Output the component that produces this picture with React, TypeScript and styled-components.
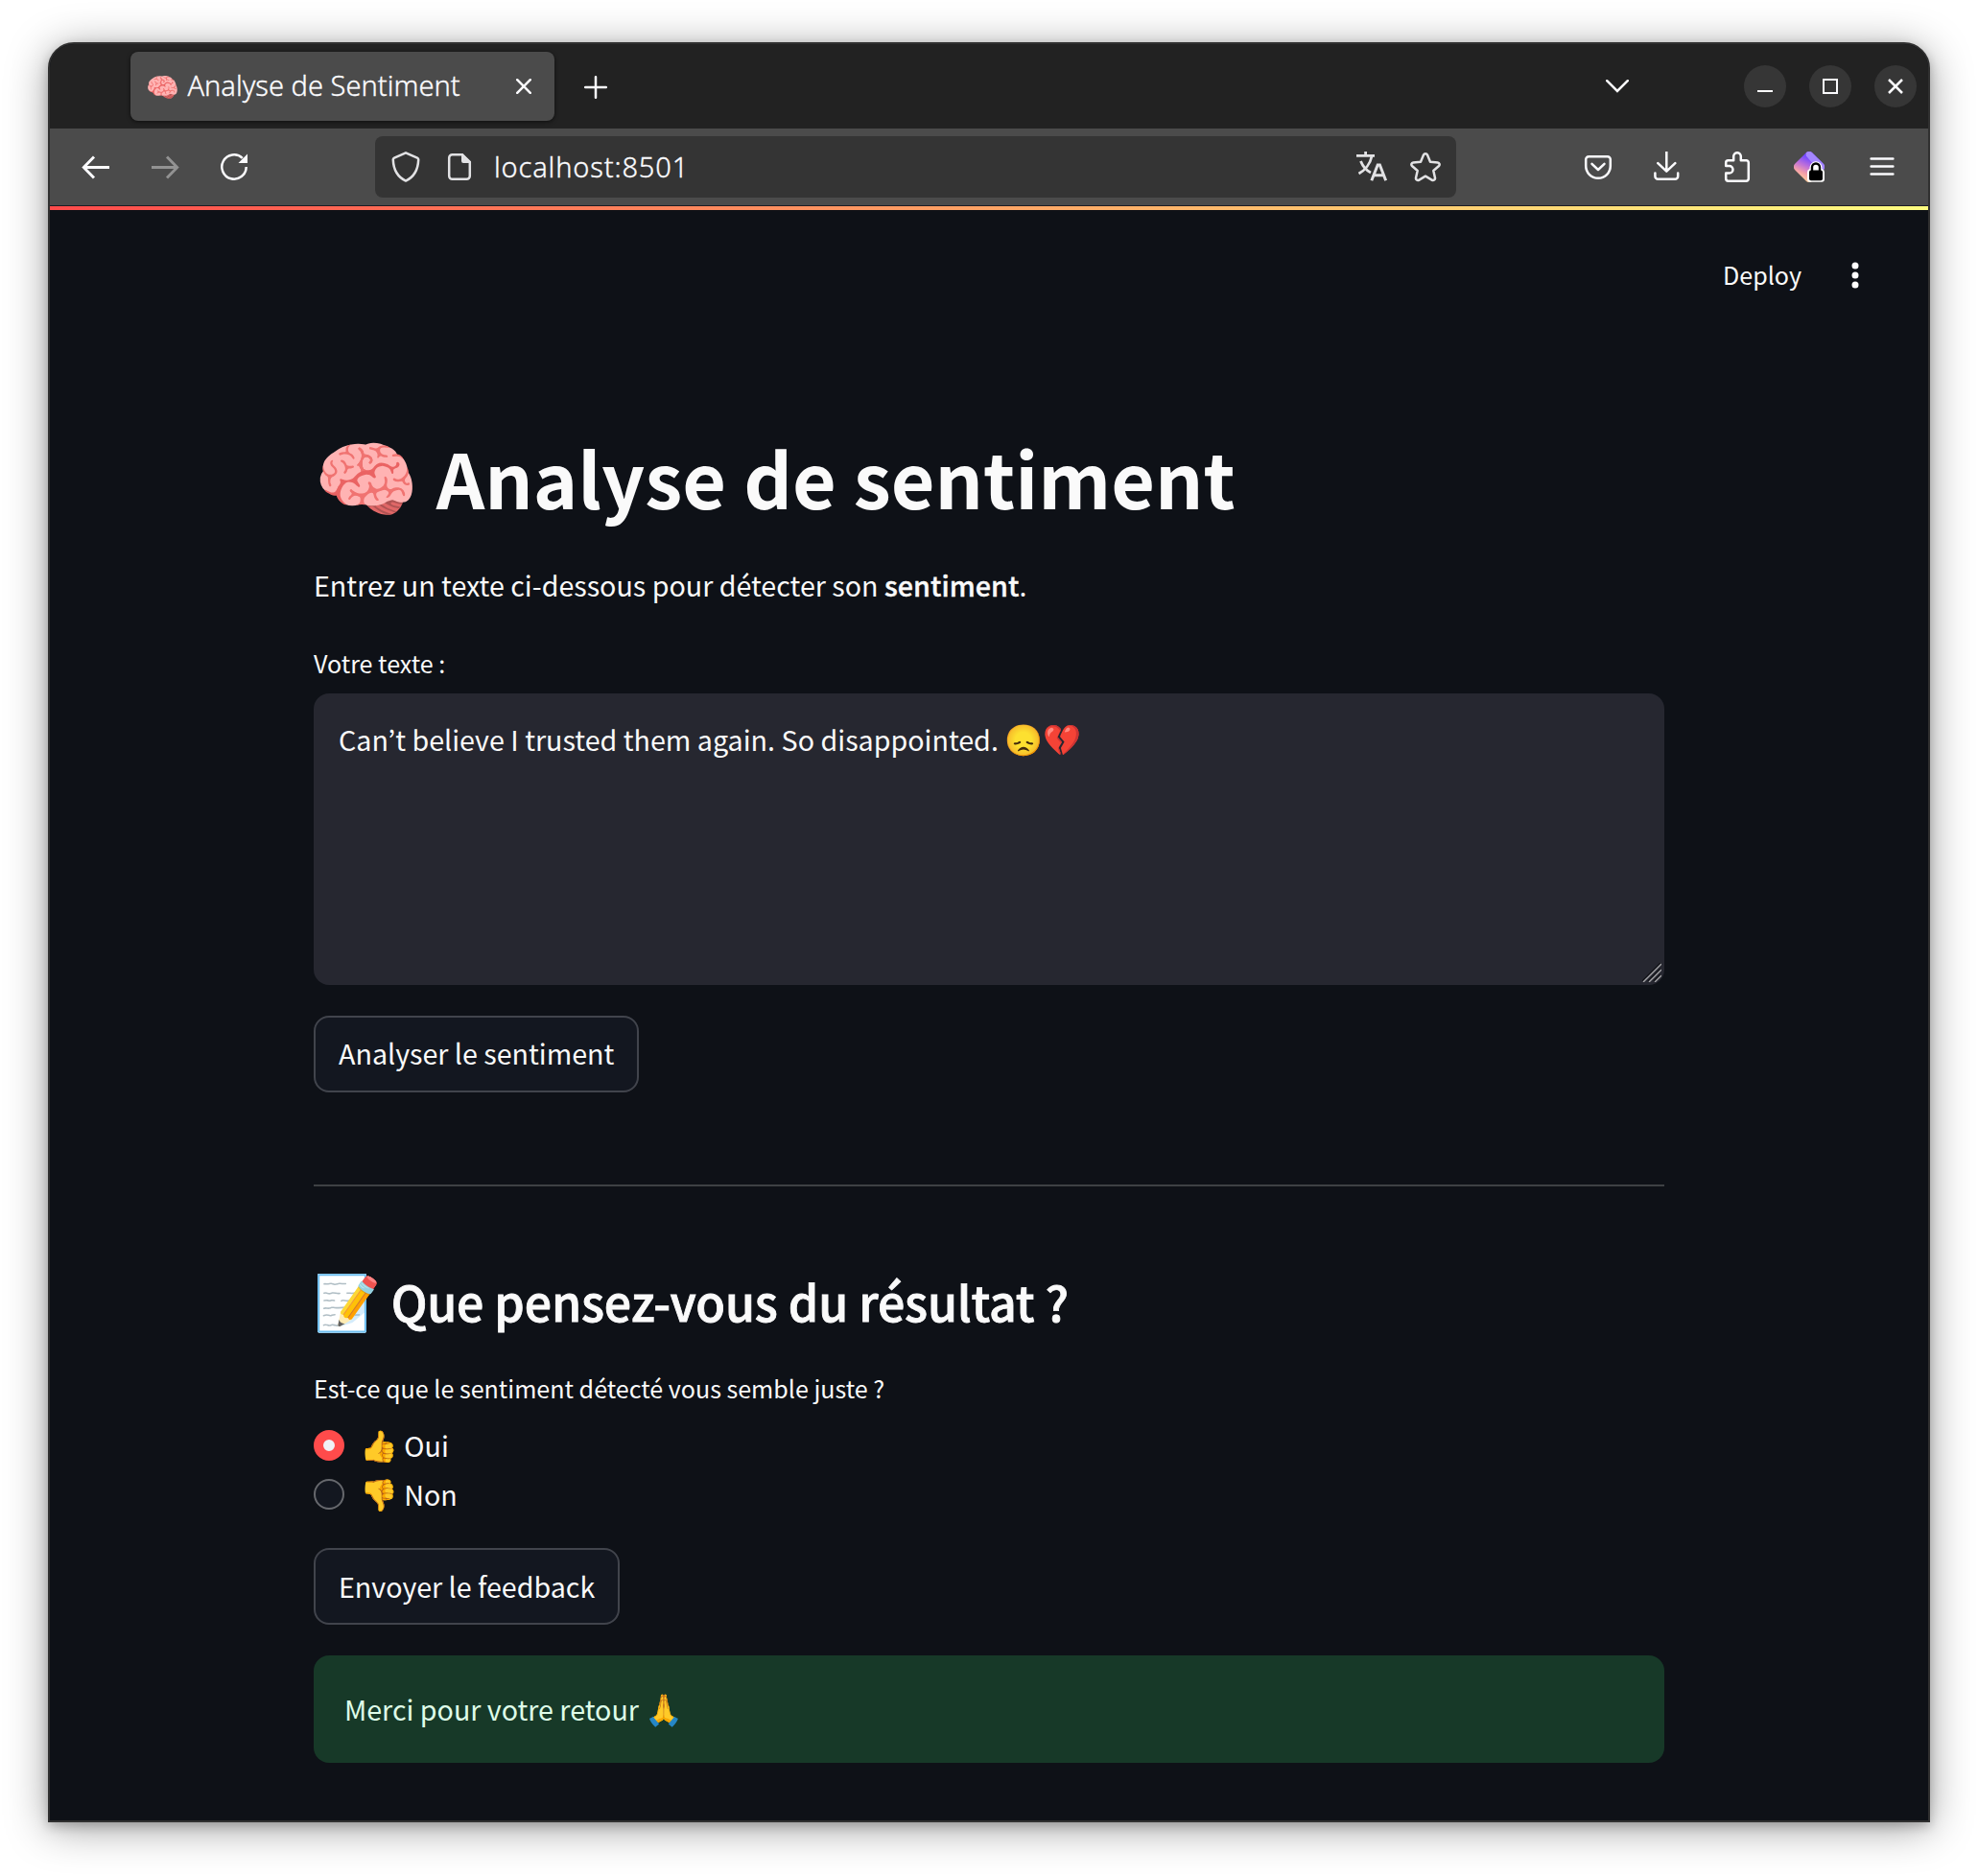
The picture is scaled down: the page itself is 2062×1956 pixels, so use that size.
import React from "react";
import styled, { createGlobalStyle } from "styled-components";

const contentFont = `"Noto Sans CJK KR", "Noto Sans", "Noto Color Emoji", sans-serif`;
const chromeFont = `"Noto Sans", "Noto Color Emoji", sans-serif`;

const GlobalStyle = createGlobalStyle`
  body { margin: 0; background: #fff; }
  *, *::before, *::after { box-sizing: border-box; }
`;

const Desktop = styled.div`
  width: 2062px;
  height: 1956px;
  padding: 44px 50px 56px;
  overflow: hidden;
  background: #fff;
`;

const Window = styled.div`
  display: flex;
  flex-direction: column;
  height: 1856px;
  border: 2px solid #303030;
  border-radius: 27px 27px 0 0;
  overflow: hidden;
  background: #0e1117;
  box-shadow: 0 4px 12px rgba(0, 0, 0, 0.22), 0 6px 44px rgba(0, 0, 0, 0.38);
`;

/* Browser chrome */

const TabBar = styled.div`
  display: flex;
  align-items: center;
  height: 88px;
  flex: none;
  padding: 0 12px 0 84px;
  background: #222;
`;

const Tab = styled.div`
  display: flex;
  align-items: center;
  width: 442px;
  height: 72px;
  padding: 0 24px 0 16px;
  border-radius: 8px;
  background: #4b4b4b;
  box-shadow: 0 1px 4px rgba(0, 0, 0, 0.6);
`;

const Favicon = styled.span`
  padding-bottom: 1px;
  font: 28px/40px ${chromeFont};
  white-space: nowrap;
`;

const TabTitle = styled.span`
  flex: 1;
  margin-left: 8.5px;
  padding-bottom: 3px;
  font: 300 29px/40px ${chromeFont};
  letter-spacing: 0.03px;
  -webkit-text-stroke: 0.35px currentColor;
  white-space: nowrap;
  color: #fbfbfe;
`;

const NewTab = styled.span`
  display: flex;
  margin: 2px auto 0 31px;
`;

const WindowButtons = styled.div`
  display: flex;
  gap: 24px;
  margin-left: 120px;
`;

const WindowButton = styled.span`
  display: grid;
  place-items: center;
  width: 44px;
  height: 44px;
  border-radius: 50%;
  background: #363636;
`;

const NavBar = styled.div`
  display: flex;
  align-items: center;
  height: 81px;
  flex: none;
  padding: 0 32px;
  background: #4b4b4b;
  border-bottom: 1px solid #1c1b22;
`;

const NavGroup = styled.div<{ $gap: number }>`
  display: flex;
  align-items: center;
  gap: ${(p) => p.$gap}px;
`;

const UrlBar = styled.div`
  display: flex;
  align-items: center;
  width: 1127px;
  height: 64px;
  margin: 0 132px 0 131px;
  padding: 0 16px;
  border-radius: 8px;
  background: #343434;
`;

const Url = styled.span`
  flex: 1;
  margin-left: 20px;
  padding-bottom: 1px;
  font: 300 29px/40px ${chromeFont};
  letter-spacing: 0.85px;
  -webkit-text-stroke: 0.35px currentColor;
  color: #fbfbfe;
`;

/* Page */

const Decoration = styled.div`
  height: 4px;
  flex: none;
  background: linear-gradient(90deg, #ff4b4b, #fffd80);
`;

const AppHeader = styled.header`
  display: flex;
  align-items: center;
  justify-content: flex-end;
  height: 136px;
  flex: none;
  padding-right: 60px;
`;

const Deploy = styled.span`
  margin: 0 40px 2px 0;
  font: 400 25.07px/40px ${contentFont};
  color: #fafafa;
`;

const Main = styled.main`
  display: flex;
  flex-direction: column;
  align-items: flex-start;
  width: 1408px;
  margin: 0 auto;
  font: 400 28.65px/52px ${contentFont};
  color: #fafafa;
  white-space: nowrap;
`;

const Title = styled.h1`
  margin: 89px 0 0;
  font-size: 78.8px;
  font-weight: 700;
  line-height: 106px;
  word-spacing: 0.2px;
`;

const Emoji = styled.span<{ $size: number }>`
  font-size: ${(p) => p.$size}px;
  line-height: 0;
`;

const Intro = styled.p`
  margin: 34px 0 0;
`;

const Strong = styled.strong`
  font-weight: 500;
  letter-spacing: 0.08px;
  -webkit-text-stroke: 0.4px currentColor;
`;

const Label = styled.label<{ $top: number }>`
  margin-top: ${(p) => p.$top}px;
  font-size: 25.07px;
  line-height: 42px;
`;

const TextBox = styled.div`
  display: flex;
  justify-content: space-between;
  align-items: flex-end;
  width: 100%;
  height: 304px;
  margin-top: 11px;
  padding: 0 3px 3px 26px;
  border-radius: 16px;
  background: #262730;
`;

const TextValue = styled.span`
  align-self: flex-start;
  margin-top: 24px;
  line-height: 48px;
  word-spacing: 0.1px;
`;

const Button = styled.button<{ $top: number; $bottom?: number }>`
  height: 80px;
  margin: ${(p) => p.$top}px 0 0;
  padding: 0 24px ${(p) => p.$bottom ?? 2}px;
  border: 2px solid #41444c;
  border-radius: 16px;
  background: #131720;
  font: inherit;
  color: inherit;
`;

const Divider = styled.hr`
  width: 100%;
  height: 2px;
  margin: 96px 0 0;
  border: 0;
  background: #3e4144;
`;

const Subtitle = styled.h3`
  margin: 85px 0 0;
  font-size: 50.1px;
  font-weight: 500;
  line-height: 68px;
  letter-spacing: -0.18px;
  -webkit-text-stroke: 0.8px currentColor;
`;

const RadioGroup = styled.div`
  display: flex;
  flex-direction: column;
  gap: 19px;
  margin-top: 23px;
`;

const RadioOption = styled.label`
  display: flex;
  align-items: center;
  gap: 16px;
  height: 32px;
`;

const RadioMark = styled.span<{ $checked?: boolean }>`
  width: 32px;
  height: 32px;
  border-radius: 50%;
  border: ${(p) => (p.$checked ? "10px solid #ff4b4b" : "2px solid #66686d")};
  background: ${(p) => (p.$checked ? "#f0f2f6" : "#131720")};
`;

const Alert = styled.div`
  display: flex;
  align-items: center;
  width: 100%;
  height: 112px;
  margin-top: 32px;
  padding: 0 32px 1px;
  border-radius: 16px;
  background: #173928;
  color: #dffde9;
`;

type IconProps = { size?: number; h?: number; color?: string; width?: number; children: React.ReactNode };

const Svg = styled.svg`
  display: block;
  flex: none;
`;

function Icon({ size = 32, h, color = "#fbfbfe", width = 2.5, children }: IconProps) {
  const height = h ?? size;
  return (
    <Svg width={size} height={height} viewBox={`0 0 ${size} ${height}`} fill="none" stroke={color} strokeWidth={width}>
      {children}
    </Svg>
  );
}

const soft = "#e2e2e4";

function ExtensionIcon() {
  return (
    <Icon>
      <defs>
        <linearGradient id="gem" x1="0.7" y1="0.1" x2="0.3" y2="0.95">
          <stop offset="0.2" stopColor="#7549ff" />
          <stop offset="0.5" stopColor="#c071d8" />
          <stop offset="0.75" stopColor="#f5a0a8" />
          <stop offset="1" stopColor="#ffd09a" />
        </linearGradient>
      </defs>
      <path d="M12.8 1.2a4.5 4.5 0 0 1 6.4 0L30.8 12.8a4.5 4.5 0 0 1 0 6.4L19.2 30.8a4.5 4.5 0 0 1-6.4 0L1.2 19.2a4.5 4.5 0 0 1 0-6.4z" fill="url(#gem)" stroke="none" />
      <path d="M12.8 1.2a4.5 4.5 0 0 1 6.4 0L30.8 12.8a4.5 4.5 0 0 1 0 6.4L27 21 12.800 4.500z" fill="#a486ff" stroke="none" />
      <path d="M14 21.5q0-2.8 2.5-3.4v-1.5a6.5 6.3 0 0 1 13 0v1.500q2.500.6 2.500 3.400v7.300a3 3 0 0 1-3 3h-12a3 3 0 0 1-3-3z" fill="#fff" stroke="none" />
      <rect x="16" y="19.600" width="14" height="10.600" rx="2" fill="#000" stroke="none" />
      <path d="M19 20.500v-4a4 4 0 0 1 8 0v4" stroke="#000" strokeWidth={2.400} />
    </Icon>
  );
}

export default function App() {
  return (
    <>
      <GlobalStyle />
      <Desktop>
        <Window>
          <TabBar>
            <Tab>
              <Favicon>🧠</Favicon>
              <TabTitle>Analyse de Sentiment</TabTitle>
              <Icon size={16}>
                <path d="M1.200 1.200 14.800 14.800M14.800 1.200 1.200 14.800" strokeLinecap="round" />
              </Icon>
            </Tab>
            <NewTab>
              <Icon size={24}>
                <path d="M12 1.200V22.800M1.200 12H22.800" strokeLinecap="round" />
              </Icon>
            </NewTab>
            <Icon size={24} h={14}>
              <path d="M1.200 1.200 12 12 22.800 1.200" strokeLinecap="round" />
            </Icon>
            <WindowButtons>
              <WindowButton>
                <Icon size={16} width={2}>
                  <path d="M0 13H16" />
                </Icon>
              </WindowButton>
              <WindowButton>
                <Icon size={16} width={2}>
                  <path d="M1 1H15V15H1Z" />
                </Icon>
              </WindowButton>
              <WindowButton>
                <Icon size={16}>
                  <path d="M1 1 15 15M15 1 1 15" />
                </Icon>
              </WindowButton>
            </WindowButtons>
          </TabBar>

          <NavBar>
            <NavGroup $gap={40}>
              <Icon>
                <path d="M30 16.500H3.500M14 5.500 3.300 16.500 14 27.500" strokeWidth={2.900} />
              </Icon>
              <Icon color="#929292">
                <path d="M2 16.500H28.500M18 5.500 28.700 16.500 18 27.500" strokeWidth={2.900} />
              </Icon>
              <Icon>
                <path d="M28.700 16A12.700 12.700 0 1 1 24.800 6.800" />
                <path d="M30 2.500V12H20.500Z" fill="#fbfbfe" stroke="none" />
              </Icon>
            </NavGroup>
            <UrlBar>
              <NavGroup $gap={24}>
                <Icon color={soft}>
                  <path d="M16 1.300 28 6.600Q29.300 7.200 29.200 8.600C28.800 18.500 24.500 26.500 16 30.600 7.500 26.500 3.200 18.500 2.800 8.600Q2.700 7.200 4 6.600Z" strokeLinejoin="round" />
                </Icon>
                <Icon color={soft}>
                  <path d="M8.500 3.200H18.500L26.800 11V25.500A3.300 3.300 0 0 1 23.500 28.800H8.500A3.300 3.300 0 0 1 5.200 25.500V6.500A3.300 3.300 0 0 1 8.500 3.200Z" />
                  <path d="M18 2H19.500L28 10.500V12H20A2 2 0 0 1 18 10Z" fill={soft} stroke="none" />
                </Icon>
              </NavGroup>
              <Url>localhost:8501</Url>
              <NavGroup $gap={24}>
                <Icon color={soft}>
                  <path d="M0 4.300H19M9.600 0V4.300M16 5C14.500 12.500 9 19.500 2.500 23M4.500 10C6.500 15 10 19.500 15 22" strokeWidth={2.800} />
                  <path d="M15.800 30.200 22.200 14H24.400L30.700 30.200M18.500 24.800H28" strokeWidth={3} />
                </Icon>
                <Icon color={soft}>
                  <path d="M14 3.500A2.200 2.200 0 0 1 18 3.500L21 10.700 28.800 11.400A2.100 2.100 0 0 1 30 15L24.300 20 26 27.600A2.100 2.100 0 0 1 23 29.800L16 25.700 9 29.800A2.100 2.100 0 0 1 6 27.600L7.700 20 2 15A2.100 2.100 0 0 1 3.200 11.400L11 10.700Z" strokeLinejoin="round" />
                </Icon>
              </NavGroup>
            </UrlBar>
            <NavGroup $gap={44}>
              <NavGroup $gap={40}>
                <Icon>
                  <path d="M6.200 5.200H25.800A3 3 0 0 1 28.800 8.200V15A12.800 12.800 0 0 1 3.200 15V8.200A3 3 0 0 1 6.200 5.200Z" />
                  <path d="M9.500 12.800 16 19 22.500 12.800" strokeLinecap="round" strokeLinejoin="round" />
                </Icon>
                <Icon>
                  <path d="M15.300 0V19M6.300 12.200 15.300 20.700 24.300 12.200" strokeLinecap="round" strokeLinejoin="round" />
                  <path d="M3.400 22.500V25.800A3 3 0 0 0 6.400 28.800H24.200A3 3 0 0 0 27.200 25.800V22.500" strokeLinecap="round" />
                </Icon>
                <Icon>
                  <path d="M7.600 9.200H13.200V5A3.800 3.800 0 0 1 20.800 5V9.200H26.400A2.400 2.400 0 0 1 28.800 11.600V28.300A2.400 2.400 0 0 1 26.400 30.700H7.600A2.400 2.400 0 0 1 5.200 28.300V22.600H8.700A3.800 3.800 0 0 0 8.700 15H5.200V11.600A2.400 2.400 0 0 1 7.600 9.200Z" strokeLinejoin="round" />
                </Icon>
              </NavGroup>
              <ExtensionIcon />
              <Icon>
                <path d="M4.600 7.500H27.400M4.600 15.500H27.400M4.600 23.600H27.400" strokeLinecap="round" />
              </Icon>
            </NavGroup>
          </NavBar>

          <Decoration />
          <AppHeader>
            <Deploy>Deploy</Deploy>
            <Icon>
              <g fill="#fff" stroke="none">
                <circle cx="16" cy="6" r="3.500" />
                <circle cx="16" cy="16" r="3.500" />
                <circle cx="16" cy="26" r="3.500" />
              </g>
            </Icon>
          </AppHeader>

          <Main>
            <Title>
              <Emoji $size={88}>🧠</Emoji> Analyse de sentiment
            </Title>
            <Intro>
              Entrez un texte ci-dessous pour détecter son <Strong>sentiment</Strong>.
            </Intro>
            <Label $top={34}>Votre texte :</Label>
            <TextBox>
              <TextValue>
                Can’t believe I trusted them again. So disappointed. <Emoji $size={32}>😞💔</Emoji>
              </TextValue>
              <Icon size={20} width={1.400}>
                <path d="M0 19 19 0M6 19 19 6M12 19 19 12" stroke="#111217" />
                <path d="M1 20 20 1M7 20 20 7M13 20 20 13" stroke="#a5a5a8" />
              </Icon>
            </TextBox>
            <Button $top={32}>Analyser le sentiment</Button>
            <Divider />
            <Subtitle>
              <Emoji $size={56}>📝</Emoji> Que pensez-vous du résultat ?
            </Subtitle>
            <Label $top={36}>Est-ce que le sentiment détecté vous semble juste ?</Label>
            <RadioGroup>
              <RadioOption>
                <RadioMark $checked />
                <span>
                  <Emoji $size={32}>👍</Emoji> Oui
                </span>
              </RadioOption>
              <RadioOption>
                <RadioMark />
                <span>
                  <Emoji $size={32}>👎</Emoji> Non
                </span>
              </RadioOption>
            </RadioGroup>
            <Button $top={40} $bottom={0}>Envoyer le feedback</Button>
            <Alert>
              <span>
                Merci pour votre retour <Emoji $size={32}>🙏</Emoji>
              </span>
            </Alert>
          </Main>
        </Window>
      </Desktop>
    </>
  );
}
